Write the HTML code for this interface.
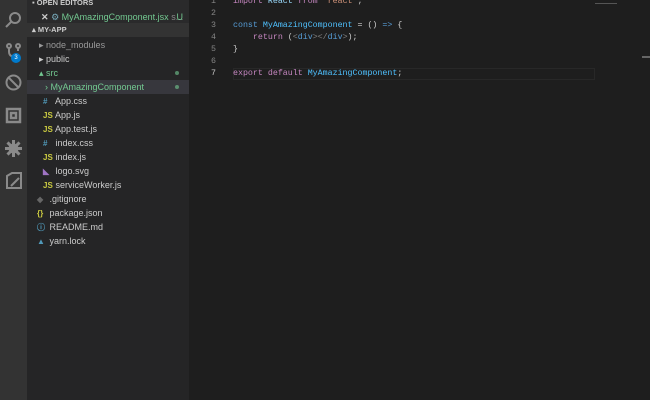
<!DOCTYPE html><html><head><style>
*{margin:0;padding:0;box-sizing:border-box}
body{width:650px;height:400px;background:#1e1e1e;overflow:hidden;position:relative;font-family:"Liberation Sans",sans-serif;font-size:9px;color:#ccc}
.act{position:absolute;left:0;top:0;width:27px;height:400px;background:#333333}
.side{position:absolute;left:27px;top:0;width:162px;height:400px;background:#252526}
.r{position:absolute;left:27px;width:162px;height:14px;line-height:14px;white-space:nowrap}
.ic{display:inline-block;width:10px;font-size:8px;font-weight:bold}
.ed{position:absolute;left:190px;top:1px;right:0;font-family:"Liberation Mono",monospace;font-size:8.3px}
.ln{position:absolute;left:0;width:26px;text-align:right;color:#858585}
.cd{position:absolute;left:43px;white-space:pre}
.k{color:#c586c0}.b{color:#569cd6}.v{color:#9cdcfe}.s{color:#ce9178}.f{color:#4fc1ff}.g{color:#808080}
.dot{position:absolute;right:10px;top:5px;width:4px;height:4px;border-radius:2px;background:#73c991;opacity:.6}
svg{position:absolute;left:5px}
</style></head><body>
<div class="act">
<svg style="top:11px" width="17" height="17" viewBox="0 0 17 17" fill="none" stroke="#8a8a8a" stroke-width="2"><circle cx="10" cy="7" r="5"/><path d="M6 11L1 16"/></svg>
<svg style="top:42px" width="17" height="20" viewBox="0 0 17 20" fill="none" stroke="#8a8a8a" stroke-width="2"><circle cx="4" cy="4" r="2"/><circle cx="13" cy="4" r="2"/><path d="M4 6v4q0 4 5 5M13 6v3"/></svg>
<div style="position:absolute;left:11px;top:53px;width:10px;height:10px;border-radius:5px;background:#007acc;color:#fff;font-size:6px;text-align:center;line-height:10px">3</div>
<svg style="top:74px" width="17" height="17" viewBox="0 0 17 17" fill="none" stroke="#8a8a8a" stroke-width="2"><circle cx="8.5" cy="8.5" r="7"/><path d="M3 3l11 11"/></svg>
<svg style="top:107px" width="17" height="17" viewBox="0 0 17 17" fill="none" stroke="#8a8a8a" stroke-width="2.5"><rect x="2" y="2" width="13" height="13"/><rect x="6" y="6" width="5" height="5"/></svg>
<svg style="top:140px" width="17" height="17" viewBox="0 0 17 17" fill="#8a8a8a"><circle cx="8.5" cy="8.5" r="5"/><rect x="7" y="0" width="3" height="17"/><rect x="0" y="7" width="17" height="3"/><rect x="7" y="0" width="3" height="17" transform="rotate(45 8.5 8.5)"/><rect x="7" y="0" width="3" height="17" transform="rotate(-45 8.5 8.5)"/></svg>
<svg style="top:172px" width="17" height="17" viewBox="0 0 17 17" fill="none" stroke="#8a8a8a" stroke-width="2"><path d="M2 16V4l5-3h9v15z"/><path d="M6 14l8-8"/></svg>
</div>
<div class="side"></div>
<div class="r" style="top:0;height:23px;background:#2a2a2b"></div>
<div class="r" style="top:-4px;font-size:7.5px;font-weight:bold;padding-left:5px">▪ OPEN EDITORS</div>
<div class="r" style="top:10px;padding-left:14px;color:#73c991"><span style="color:#ccc;font-weight:bold">✕</span> <span style="color:#7ab">⚙</span> MyAmazingComponent.jsx  <span style="color:#888">s...</span> <span style="position:absolute;right:6px">U</span></div>
<div class="r" style="top:23px;height:14px;background:#333;font-size:7.5px;font-weight:bold;padding-left:5px">▴ MY-APP</div>
<div class="r" style="top:38px;padding-left:12px;color:#999">▸ node_modules</div>
<div class="r" style="top:52px;padding-left:12px">▸ public</div>
<div class="r" style="top:66px;padding-left:12px;color:#73c991">▴ src<span class="dot"></span></div>
<div class="r" style="top:80px;padding-left:18px;background:#37373d;color:#73c991">› MyAmazingComponent<span class="dot"></span></div>
<div class="r" style="top:94px;padding-left:16px"><span class="ic" style="color:#519aba">#</span> App.css</div>
<div class="r" style="top:108px;padding-left:16px"><span class="ic" style="color:#cbcb41">JS</span> App.js</div>
<div class="r" style="top:122px;padding-left:16px"><span class="ic" style="color:#cbcb41">JS</span> App.test.js</div>
<div class="r" style="top:136px;padding-left:16px"><span class="ic" style="color:#519aba">#</span> index.css</div>
<div class="r" style="top:150px;padding-left:16px"><span class="ic" style="color:#cbcb41">JS</span> index.js</div>
<div class="r" style="top:164px;padding-left:16px"><span class="ic" style="color:#a074c4">◣</span> logo.svg</div>
<div class="r" style="top:178px;padding-left:16px"><span class="ic" style="color:#cbcb41">JS</span> serviceWorker.js</div>
<div class="r" style="top:192px;padding-left:10px"><span class="ic" style="color:#666">◆</span> .gitignore</div>
<div class="r" style="top:206px;padding-left:10px"><span class="ic" style="color:#cbcb41">{}</span> package.json</div>
<div class="r" style="top:220px;padding-left:10px"><span class="ic" style="color:#519aba">ⓘ</span> README.md</div>
<div class="r" style="top:234px;padding-left:10px"><span class="ic" style="color:#519aba">▲</span> yarn.lock</div>
<div class="ed">
<div style="position:absolute;left:43px;top:67px;width:362px;height:12px;border:1px solid #282828"></div>
<div style="position:absolute;left:405px;top:2px;width:22px;height:1px;background:#555"></div>
<div style="position:absolute;left:452px;top:55px;width:8px;height:2px;background:#666"></div>
<div class="ln" style="top:-4px">1</div><div class="cd" style="top:-4px"><span class="k">import</span> <span class="v">React</span> <span class="k">from</span> <span class="s">'react'</span>;</div>
<div class="ln" style="top:8px">2</div>
<div class="ln" style="top:20px">3</div><div class="cd" style="top:20px"><span class="b">const</span> <span class="f">MyAmazingComponent</span> = () <span class="b">=&gt;</span> {</div>
<div class="ln" style="top:32px">4</div><div class="cd" style="top:32px">    <span class="k">return</span> (<span class="g">&lt;</span><span class="b">div</span><span class="g">&gt;&lt;/</span><span class="b">div</span><span class="g">&gt;</span>);</div>
<div class="ln" style="top:44px">5</div><div class="cd" style="top:44px">}</div>
<div class="ln" style="top:56px">6</div>
<div class="ln" style="top:68px;color:#c6c6c6">7</div><div class="cd" style="top:68px"><span class="k">export</span> <span class="k">default</span> <span class="f">MyAmazingComponent</span>;</div>
</div>
</body></html>
